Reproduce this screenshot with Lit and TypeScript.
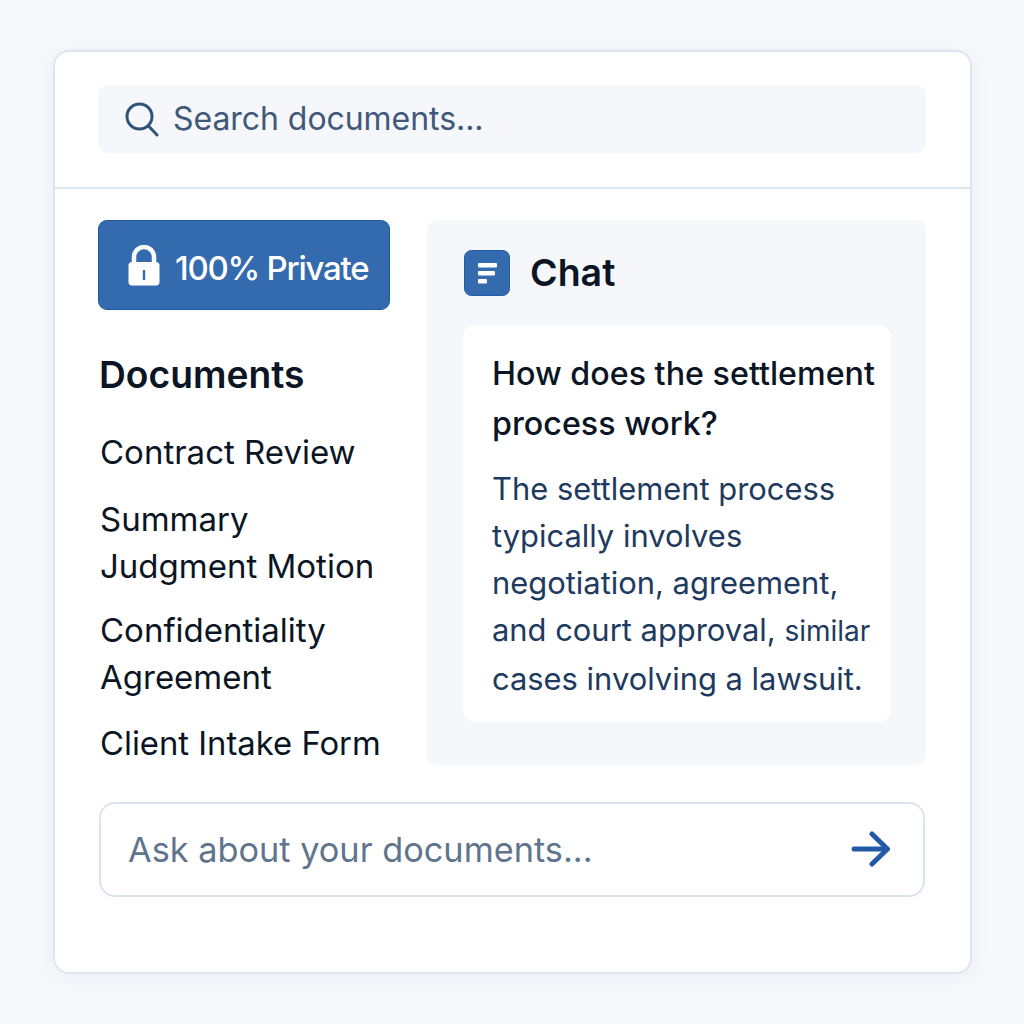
import { LitElement, html, css } from "lit";
import { customElement } from "lit/decorators.js";

@customElement("app-root")
export class AppRoot extends LitElement {
  static styles = css`
    :host { display: block; width: 1024px; height: 1024px; background: #f6f8fb; font-family: Inter, "Liberation Sans", sans-serif; box-sizing: border-box; padding: 50px 52px 50px 53px; }
    * { box-sizing: border-box; }
    .card { height: 924px; background: #fff; border: 2px solid #dde6ef; border-radius: 16px; box-shadow: 0 4px 20px rgba(30,60,100,.05); }
    .top { height: 137px; padding: 33px 44px 0 43px; border-bottom: 2px solid #dbe5ee; }
    .search { height: 68px; background: #f5f7fb; border-radius: 10px; display: flex; align-items: center; padding-left: 27px; gap: 14px; color: #40597a; font-size: 32px; letter-spacing: -0.05px; }
    .search span { margin-top: -1px; }
    .search svg { display: block; flex: none; }
    .main { display: flex; padding: 31px 44px 0 43px; gap: 37px; height: 577px; }
    .left { width: 292px; flex: none; }
    .badge { height: 90px; background: #346aae; border: 1px solid #1f5ba6; border-radius: 9px; display: flex; align-items: center; padding-left: 29px; gap: 15px; color: #fff; font-size: 33px; font-weight: 500; letter-spacing: -1.25px; }
    .badge span { margin-top: 6px; }
    .badge svg { display: block; flex: none; margin-top: 2px; }
    h2 { margin: 0; font-weight: 600; color: #0b1524; }
    .docs { font-size: 37.2px; line-height: 44px; margin: 43px 0 0 1px; }
    ul { list-style: none; margin: 32px 0 0 2px; padding: 0; font-size: 33px; line-height: 47px; color: #0b1524; }
    li:nth-child(2) { margin-top: 20px; }
    li:nth-child(3) { margin-top: 17px; }
    li:nth-child(4) { margin-top: 19px; }
    li:last-child { font-size: 32.8px; }
    .right { flex: 1; background: #f5f7fb; border-radius: 10px; padding: 30px 35px 0 36px; height: 545px; }
    .chat-h { display: flex; align-items: center; gap: 20px; margin-left: 1px; height: 46px; }
    .chat-h svg { display: block; flex: none; }
    .chat-h h2 { font-size: 37.5px; margin-top: -2px; }
    .bubble { margin-top: 29px; background: #fff; border-radius: 12px; height: 397px; padding: 24px 0 0 29px; }
    .q { font-size: 32.25px; font-weight: 500; line-height: 50px; color: #0b1524; margin: 0; white-space: nowrap; }
    .a { font-size: 30.9px; line-height: 47px; color: #1e3a5f; margin: 16px 0 0; white-space: nowrap; }
    .sm { font-size: 28px; }
    .composer { margin: 36px 45px 0 44px; height: 95px; border: 2px solid #d9e4ee; border-radius: 16px; display: flex; align-items: center; justify-content: space-between; padding: 0 32px 0 27px; color: #5f748d; font-size: 34.3px; background: #fff; }
    .composer svg { display: block; flex: none; margin-top: -1px; }
  `;

  render() {
    return html`
      <div class="card">
        <div class="top">
          <div class="search">
            <svg width="34" height="36" viewBox="0 0 34 36" fill="none" stroke="#2f5479" stroke-width="3" stroke-linecap="round"><circle cx="14.5" cy="15.5" r="12.5"/><path d="M23.5 25 L32 34"/></svg>
            <span>Search documents...</span>
          </div>
        </div>
        <div class="main">
          <div class="left">
            <div class="badge">
              <svg width="32" height="42" viewBox="0 0 32 42"><path d="M6 19 V12 a10 10 0 0 1 20 0 V19" fill="none" stroke="#fff" stroke-width="4.5"/><path fill-rule="evenodd" fill="#fff" d="M4 17 H28 a3.500 3.500 0 0 1 3.500 3.500 V37 a3.500 3.500 0 0 1 -3.500 3.500 H4 a3.500 3.500 0 0 1 -3.500 -3.500 V20.500 a3.500 3.500 0 0 1 3.500 -3.500 Z M14.800 25 v10 h2.400 v-10 Z"/></svg>
              <span>100% Private</span>
            </div>
            <h2 class="docs">Documents</h2>
            <ul>
              <li>Contract Review</li>
              <li>Summary<br>Judgment Motion</li>
              <li>Confidentiality<br>Agreement</li>
              <li>Client Intake Form</li>
            </ul>
          </div>
          <div class="right">
            <div class="chat-h">
              <svg width="46" height="46" viewBox="0 0 46 46"><rect x="0.500" y="0.500" width="45" height="45" rx="7" fill="#346aae" stroke="#1f5ba6"/><g fill="#fff"><rect x="14" y="13" width="19" height="4.500" rx="1"/><rect x="14" y="21" width="17" height="4.500" rx="1"/><rect x="14" y="29" width="9" height="4.500" rx="1"/></g></svg>
              <h2>Chat</h2>
            </div>
            <div class="bubble">
              <p class="q">How does the settlement<br>process work?</p>
              <p class="a">The settlement process<br>typically involves<br>negotiation, agreement,<br>and court approval, <span class="sm">similar</span><br>cases involving a lawsuit.</p>
            </div>
          </div>
        </div>
        <div class="composer">
          <span>Ask about your documents...</span>
          <svg width="40" height="36" viewBox="0 0 40 36" fill="none" stroke="#2359a6" stroke-width="5" stroke-linecap="round" stroke-linejoin="round"><path d="M3 18 H36"/><path d="M21 3 L36.500 18 L21 33"/></svg>
        </div>
      </div>
    `;
  }
}
